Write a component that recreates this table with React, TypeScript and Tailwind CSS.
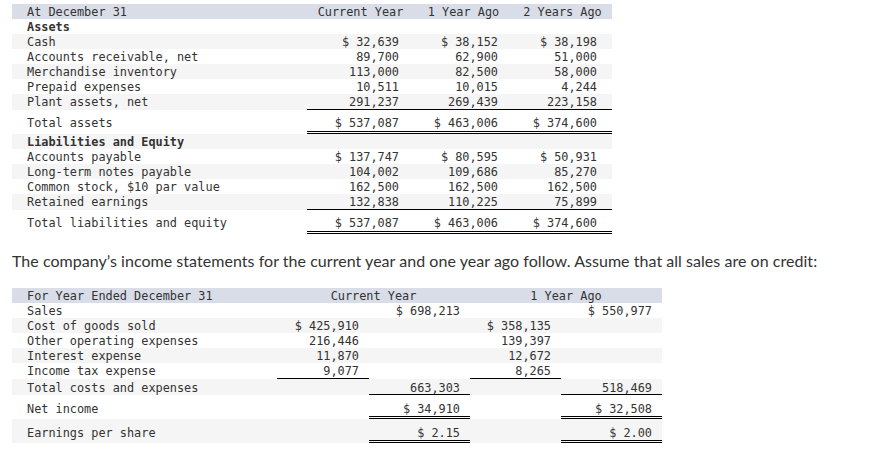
import React from "react"

type Row = {
  label?: string
  vals?: string[]
  bold?: boolean
  gray?: boolean
  kind?: "under" | "total"
}

const balance: Row[] = [
  { label: "Assets", bold: true },
  { label: "Cash", gray: true, vals: ["$ 32,639", "$ 38,152", "$ 38,198"] },
  { label: "Accounts receivable, net", vals: ["89,700", "62,900", "51,000"] },
  { label: "Merchandise inventory", gray: true, vals: ["113,000", "82,500", "58,000"] },
  { label: "Prepaid expenses", vals: ["10,511", "10,015", "4,244"] },
  { label: "Plant assets, net", gray: true, kind: "under", vals: ["291,237", "269,439", "223,158"] },
  { label: "Total assets", kind: "total", vals: ["$ 537,087", "$ 463,006", "$ 374,600"] },
  { label: "Liabilities and Equity", bold: true, gray: true },
  { label: "Accounts payable", vals: ["$ 137,747", "$ 80,595", "$ 50,931"] },
  { label: "Long-term notes payable", gray: true, vals: ["104,002", "109,686", "85,270"] },
  { label: "Common stock, $10 par value", vals: ["162,500", "162,500", "162,500"] },
  { label: "Retained earnings", gray: true, kind: "under", vals: ["132,838", "110,225", "75,899"] },
  { label: "Total liabilities and equity", kind: "total", vals: ["$ 537,087", "$ 463,006", "$ 374,600"] },
]

// income statement: [detail cur, total cur, detail prior, total prior]
type IncRow = {
  label: string
  vals: string[]
  gray?: boolean
  lines: ("" | "s" | "d")[]
  h: string
  pt: string
}

const income: IncRow[] = [
  { label: "Sales", vals: ["", "$ 698,213", "", "$ 550,977"], lines: ["", "", "", ""], h: "h-[15px]", pt: "pt-[1px]" },
  { label: "Cost of goods sold", gray: true, vals: ["$ 425,910", "", "$ 358,135", ""], lines: ["", "", "", ""], h: "h-[15px]", pt: "pt-[1px]" },
  { label: "Other operating expenses", vals: ["216,446", "", "139,397", ""], lines: ["", "", "", ""], h: "h-[15px]", pt: "pt-[1px]" },
  { label: "Interest expense", gray: true, vals: ["11,870", "", "12,672", ""], lines: ["", "", "", ""], h: "h-[15px]", pt: "pt-[1px]" },
  { label: "Income tax expense", vals: ["9,077", "", "8,265", ""], lines: ["s", "", "s", ""], h: "h-[16px]", pt: "pt-[1px]" },
  { label: "Total costs and expenses", gray: true, vals: ["", "663,303", "", "518,469"], lines: ["", "s", "", "s"], h: "h-[16px]", pt: "pt-[2px]" },
  { label: "Net income", vals: ["", "$ 34,910", "", "$ 32,508"], lines: ["", "d", "", "d"], h: "h-[24px]", pt: "pt-[7px]" },
  { label: "Earnings per share", gray: true, vals: ["", "$ 2.15", "", "$ 2.00"], lines: ["", "d", "", "d"], h: "h-[24px]", pt: "pt-[7px]" },
]

const widths1 = ["w-[107px]", "w-[99px]", "w-[99px]"]
const widths2 = ["w-[92px]", "w-[101px]", "w-[91px]", "w-[101px]"]

function BalanceSheet() {
  return (
    <div className="w-[600px]">
      {/* Header */}
      <div className="flex h-[15px] bg-[#d9dde7] pt-[1px]">
        <div className="w-[295px] pl-[15px]">At December 31</div>
        <div className="w-[107px] text-center">Current Year</div>
        <div className="w-[99px] text-center">1 Year Ago</div>
        <div className="w-[99px] text-center">2 Years Ago</div>
      </div>

      {balance.map((row, i) => {
        const h = row.kind === "total" ? "h-[24px]" : row.kind === "under" ? "h-[16px]" : "h-[15px]"
        const pt = row.kind === "total" ? "pt-[6px]" : "pt-[1px]"
        const border =
          row.kind === "under"
            ? "border-b border-black"
            : row.kind === "total"
            ? "border-b-[3px] border-double border-black"
            : ""
        return (
          <div key={i} className={`flex ${h} ${row.gray ? "bg-[#f5f5f5]" : "bg-white"}`}>
            <div className={`w-[295px] pl-[15px] ${pt} ${row.bold ? "font-bold" : ""}`}>{row.label}</div>
            {row.vals &&
              row.vals.map((v, j) => (
                <div key={j} className={`${widths1[j]} h-full pr-[15px] text-right ${pt} ${border}`}>
                  {v}
                </div>
              ))}
          </div>
        )
      })}
    </div>
  )
}

function IncomeStatement() {
  return (
    <div className="w-[650px]">
      <div className="flex h-[15px] bg-[#d9dde7] pt-[1px]">
        <div className="w-[265px] pl-[15px]">For Year Ended December 31</div>
        <div className="w-[193px] text-center">Current Year</div>
        <div className="w-[192px] text-center">1 Year Ago</div>
      </div>
      {income.map((row, i) => (
        <div key={i} className={`flex ${row.h} ${row.gray ? "bg-[#f5f5f5]" : "bg-white"}`}>
          <div className={`w-[265px] pl-[15px] ${row.pt}`}>{row.label}</div>
          {row.vals.map((v, j) => (
            <div
              key={j}
              className={`${widths2[j]} h-full pr-[10px] text-right ${row.pt} ${
                row.lines[j] === "s"
                  ? "border-b border-black"
                  : row.lines[j] === "d"
                  ? "border-b-[3px] border-double border-black"
                  : ""
              }`}
            >
              {v}
            </div>
          ))}
        </div>
      ))}
    </div>
  )
}

export default function App() {
  return (
    <div className="min-h-screen bg-white pl-[12px] pt-[4px] text-[#333]">
      <div className="font-['DejaVu_Sans_Mono',monospace] text-[11.86px] leading-[15px]">
        <BalanceSheet />
      </div>

      <p className="mt-[15px] mb-[15px] font-['Lato',sans-serif] text-[16px] leading-[24px] tracking-[0.04px] text-[#333]">
        The company’s income statements for the current year and one year ago follow. Assume that all sales are on credit:
      </p>

      <div className="font-['DejaVu_Sans_Mono',monospace] text-[11.86px] leading-[15px]">
        <IncomeStatement />
      </div>
    </div>
  )
}
